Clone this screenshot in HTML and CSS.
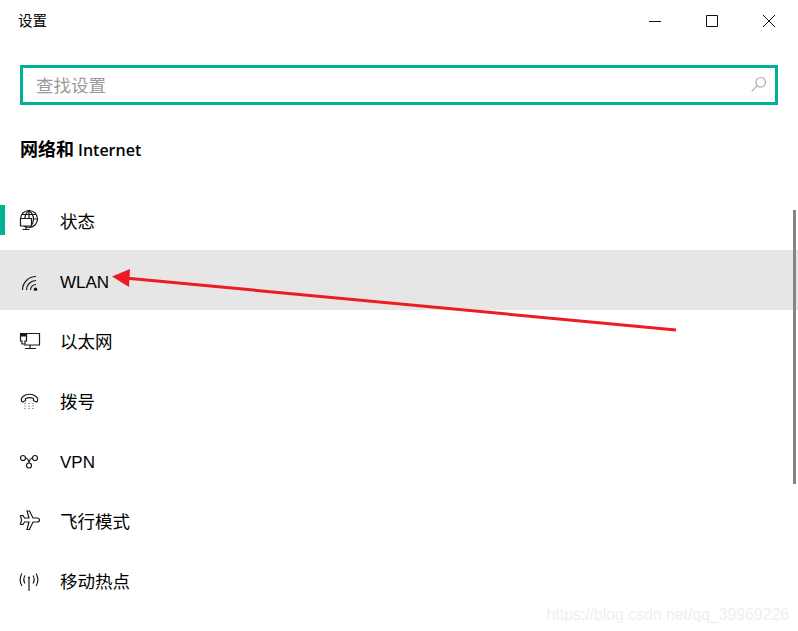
FILE: index.html
```html
<!DOCTYPE html>
<html lang="zh-CN">
<head>
  <meta charset="UTF-8" />
  <meta name="viewport" content="width=device-width, initial-scale=1.0"/>
  <title>设置</title>
  <link rel="stylesheet" href="styles.css">
</head>
<body>

  <div class="window">
    <div class="titlebar">
      <span class="app-title">设置</span>
      <div class="win-buttons">
        <svg class="win-icon" viewBox="0 0 12 12"><path d="M0 6.500h12"/></svg>
        <svg class="win-icon" viewBox="0 0 12 12"><path d="M.5.5h11v11H.5z"/></svg>
        <svg class="win-icon" viewBox="0 0 12 12"><path d="M0 0l12 12M12 0L0 12"/></svg>
      </div>
    </div>

    <div class="search-wrap">
      <div class="search">
        <span class="search-text">查找设置</span>
        <svg class="search-icon" viewBox="0 0 16 16"><circle cx="9.700" cy="6.300" r="4.800"/><path d="M6.300 9.700L.6 15.400"/></svg>
      </div>
    </div>

    <h2 class="section">网络和 <span class="section-latin">Internet</span></h2>

    <ul class="menu">
      <li class="item current">
        <svg class="item-icon" viewBox="0 0 20 20"><circle cx="10" cy="9" r="8.500"/><path d="M3 4.500h14M10 .5v8M6 8C6 5 7.500 2.500 10 .5c3 2.500 4.500 5 4.500 8.500 0 3-1.500 6-3.500 8M15 9h3.500"/><path class="solid" d="M1.500 8.500h11v7.500h-11z"/><path d="M7 16v3M3.500 19.500h7"/></svg>
        <span class="label">状态</span>
      </li>
      <li class="item active">
        <svg class="item-icon" viewBox="0 0 20 20"><path d="M3.500 20A13.500 13.500 0 0 1 17 6.500M7.500 20A9.500 9.500 0 0 1 17 10.500M11.500 20A5.500 5.500 0 0 1 17 14.500"/><circle class="dot" cx="16.500" cy="19.300" r="1.800"/></svg>
        <span class="label latin">WLAN</span>
      </li>
      <li class="item">
        <svg class="item-icon" viewBox="0 0 20 20"><path d="M7 3.500h13.500v11.500H5M11 15v3.500M6 18.500h11"/><path class="solid" d="M1.500 3.500h6v7.500H6v3H3v-3H1.500z"/><path class="thick" d="M1.500 5h6"/></svg>
        <span class="label">以太网</span>
      </li>
      <li class="item">
        <svg class="item-icon" viewBox="0 0 20 20"><path d="M3.500 12c-1.500-1-2-3.500.5-5.500 3.500-3 9.500-3 13 0 2.500 2 2 4.500.5 5.500l-3-1.300V8.500c-2.500-1-5.500-1-8 0v2.200z"/><path class="dots" d="M6 13v1M10 13v1M14 13v1M6 15.500v1M10 15.500v1M14 15.500v1M6 18v1M10 18v1M14 18v1"/></svg>
        <span class="label">拨号</span>
      </li>
      <li class="item">
        <svg class="item-icon" viewBox="0 0 20 20"><circle cx="4" cy="8" r="2.500"/><circle cx="16" cy="8" r="2.500"/><circle cx="10" cy="15.500" r="2.500"/><path d="M6.500 8c2 0 3 2 3.500 5M13.500 8c-2 0-3 2-3.500 5"/></svg>
        <span class="label latin">VPN</span>
      </li>
      <li class="item">
        <svg class="item-icon" viewBox="0 0 20 20"><path d="M8 1h2.500L14 8h4c1.500 0 2.500 1 2.500 2s-1 2-2.500 2h-4l-3.500 7.500H8l2-7.500H5.500L4 14.500H1.500l1-4.500-1-4.500H4L5.500 8H10z"/></svg>
        <span class="label">飞行模式</span>
      </li>
      <li class="item">
        <svg class="item-icon" viewBox="0 0 20 20"><path d="M10 8v13M6 5.500c-1.500 2.500-1.500 5.500 0 8M14 5.500c1.500 2.500 1.500 5.500 0 8M3 3.500C.5 7 .5 12.500 3 16M17 3.500c2.500 3.500 2.500 9 0 12.500"/><circle class="dot" cx="10" cy="7.500" r="1"/></svg>
        <span class="label">移动热点</span>
      </li>
    </ul>

    <div class="scroll-thumb"></div>

    <svg class="arrow" viewBox="0 0 798 631">
      <path class="arrow-line" d="M125 278L676 330"/>
      <path class="arrow-head" d="M112 276.500L130 269L129 287z"/>
    </svg>

    <span class="watermark">https://blog.csdn.net/qq_39969226</span>
  </div>

</body>
</html>
```

FILE: styles.css
```css
* {
  box-sizing: border-box;
}

html, body {
  margin: 0;
  height: 100%;
}

body {
  font-family: "Liberation Sans", "Noto Sans CJK SC", sans-serif;
  background: #fff;
  color: #000;
}

.window {
  position: relative;
  width: 798px;
  height: 631px;
  overflow: hidden;
}

.titlebar {
  display: flex;
  justify-content: space-between;
  align-items: center;
  height: 41px;
  padding: 0 23px 0 18px;
}

.app-title {
  font-size: 14.5px;
  margin-bottom: 2px;
}

.win-buttons {
  display: flex;
  gap: 45px;
}

.win-icon {
  width: 12px;
  height: 12px;
  fill: none;
  stroke: #111;
  stroke-width: 1;
}

.search-wrap {
  padding: 24px 20px 0;
}

.search {
  display: flex;
  justify-content: space-between;
  align-items: center;
  width: 758px;
  height: 40px;
  padding: 0 8px 2px 13px;
  border: 3px solid #00b294;
}

.search-text {
  font-size: 17.5px;
  color: #9a9a9a;
}

.search-icon {
  width: 16px;
  height: 16px;
  fill: none;
  stroke: #aaa;
  stroke-width: 1.2;
}

.section {
  margin: 33px 0 0 20px;
  font-size: 18px;
  line-height: 24px;
  font-weight: 700;
}

.section-latin {
  margin-left: -1px;
  font-family: "Open Sans", sans-serif;
  font-size: 16px;
  font-weight: 600;
}

.menu {
  list-style: none;
  margin: 28px 0 0;
  padding: 0;
}

.item {
  position: relative;
  display: flex;
  align-items: center;
  gap: 21px;
  height: 60px;
  padding-left: 19px;
}

.item.active {
  background: #e6e6e6;
}

.item.current::before {
  content: "";
  position: absolute;
  left: 0;
  top: 15px;
  width: 5px;
  height: 30px;
  background: #00b294;
}

.label {
  font-size: 17.5px;
}

.label.latin {
  font-size: 17px;
  padding-top: 6px;
}

.item-icon {
  width: 20px;
  height: 20px;
  fill: none;
  stroke: #1a1a1a;
  stroke-width: 1.2;
  overflow: visible;
}

.item-icon .solid {
  fill: #fff;
}

.item-icon .thick {
  stroke-width: 3;
}

.item-icon .dot {
  fill: #1a1a1a;
  stroke: none;
}

.item-icon .dots {
  stroke-width: 1;
  stroke: #555;
}

.scroll-thumb {
  position: absolute;
  left: 793px;
  top: 210px;
  width: 3px;
  height: 274px;
  background: #858585;
}

.arrow {
  position: absolute;
  left: 0;
  top: 0;
  width: 798px;
  height: 631px;
  pointer-events: none;
}

.arrow-line {
  fill: none;
  stroke: #ed1c24;
  stroke-width: 3;
}

.arrow-head {
  fill: #ed1c24;
}

.watermark {
  position: absolute;
  right: 9px;
  bottom: 7px;
  font-size: 15.8px;
  color: #efefef;
}
```
